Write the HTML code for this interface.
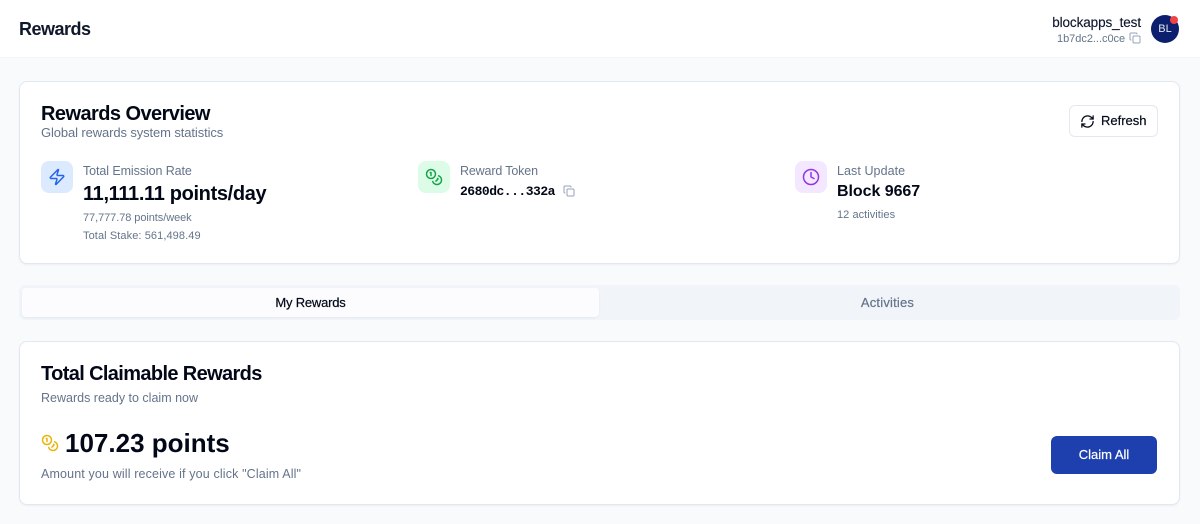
<!DOCTYPE html>
<html><head><meta charset="utf-8"><style>
html,body{margin:0;padding:0;width:1200px;height:524px;overflow:hidden;background:#f8fafc}
body{position:relative;font-family:"Liberation Sans",sans-serif;color:#020817}
.t{position:absolute;white-space:nowrap;line-height:20px}
.b{font-weight:700}
.m{-webkit-text-stroke:.2px currentColor}
.g{color:#64748b}
.box{position:absolute;box-sizing:border-box}
.card{background:#fff;border:1px solid #e2e8f0;border-radius:8px;box-shadow:0 1px 2px rgba(0,0,0,.05);left:19px;width:1161px}
svg{position:absolute;fill:none;stroke-linecap:round;stroke-linejoin:round}
.ic{width:32px;height:32px;border-radius:8px;position:absolute}
</style></head><body>
<div class="box" style="left:0;top:0;width:1200px;height:58px;background:#fff;border-bottom:1px solid #f1f5f9"></div>
<div class="t b" style="left:19px;top:19px;font-size:18px;letter-spacing:-.5px;color:#0f172a">Rewards</div>
<div class="t m" style="right:59px;top:13px;font-size:13.5px;letter-spacing:-.09px;-webkit-text-stroke-width:.15px;color:#0f172a">blockapps_test</div>
<div class="t g" style="left:1057px;top:29px;font-size:11px;letter-spacing:-.03px">1b7dc2...c0ce</div>
<svg style="left:1129px;top:32px" width="12" height="12" viewBox="0 0 24 24" stroke="#94a3b8" stroke-width="2"><rect x="8" y="8" width="14" height="14" rx="2"/><path d="M4 16c-1.100 0-2-.9-2-2V4c0-1.100.9-2 2-2h10c1.100 0 2 .9 2 2"/></svg>
<div class="box" style="left:1151px;top:15px;width:28px;height:28px;border-radius:50%;background:#0b1f6e;color:#e2e8f0;font-size:11px;line-height:28px;text-align:center">BL</div>
<div class="box" style="left:1170px;top:16px;width:8px;height:8px;border-radius:50%;background:#ef4444"></div>

<div class="box card" style="top:81px;height:183px"></div>
<div class="t b" style="left:41px;top:104px;font-size:20px;letter-spacing:-.56px">Rewards Overview</div>
<div class="t g" style="left:41px;top:123px;font-size:13px;letter-spacing:-.11px">Global rewards system statistics</div>
<div class="box" style="left:1069px;top:105px;width:89px;height:32px;background:#fff;border:1px solid #e2e8f0;border-radius:6px"></div>
<svg style="left:1080px;top:114px" width="15" height="15" viewBox="0 0 24 24" stroke="#020817" stroke-width="2"><path d="M3 12a9 9 0 0 1 9-9 9.750 9.750 0 0 1 6.740 2.740L21 8"/><path d="M21 3v5h-5"/><path d="M21 12a9 9 0 0 1-9 9 9.750 9.750 0 0 1-6.740-2.740L3 16"/><path d="M8 16H3v5"/></svg>
<div class="t m" style="left:1101px;top:111px;font-size:13px">Refresh</div>

<div class="ic" style="left:41px;top:161px;background:#dbeafe"></div>
<svg style="left:48px;top:168px" width="18" height="18" viewBox="0 0 24 24" stroke="#2563eb" stroke-width="2"><path d="M4 14a1 1 0 0 1-.78-1.630l9.900-10.200a.5.5 0 0 1 .86.46l-1.920 6.020A1 1 0 0 0 13 10h7a1 1 0 0 1 .78 1.630l-9.900 10.200a.5.5 0 0 1-.86-.46l1.920-6.020A1 1 0 0 0 11 14z"/></svg>
<div class="t g" style="left:83px;top:161px;font-size:12.5px;letter-spacing:-.09px">Total Emission Rate</div>
<div class="t b" style="left:83px;top:184px;font-size:20px;letter-spacing:-.34px">11,111.11 points/day</div>
<div class="t g" style="left:83px;top:208px;font-size:11px;letter-spacing:-.07px">77,777.78 points/week</div>
<div class="t g" style="left:83px;top:226px;font-size:11px;letter-spacing:.09px">Total Stake: 561,498.49</div>

<div class="ic" style="left:418px;top:161px;background:#dcfce7"></div>
<svg style="left:425px;top:168px" width="18" height="18" viewBox="0 0 24 24" stroke="#16a34a" stroke-width="2"><circle cx="8" cy="8" r="6"/><path d="M18.090 10.370A6 6 0 1 1 10.340 18"/><path d="M7 6h1v4"/><path d="m16.710 13.880.7.71-2.820 2.820"/></svg>
<div class="t g" style="left:460px;top:161px;font-size:12.5px;letter-spacing:-.15px">Reward Token</div>
<div class="t b" style="left:460px;top:182px;font-family:'Liberation Mono',monospace;font-size:13px;letter-spacing:-.5px">2680dc...332a</div>
<svg style="left:563px;top:185px" width="12" height="12" viewBox="0 0 24 24" stroke="#94a3b8" stroke-width="2"><rect x="8" y="8" width="14" height="14" rx="2"/><path d="M4 16c-1.100 0-2-.9-2-2V4c0-1.100.9-2 2-2h10c1.100 0 2 .9 2 2"/></svg>

<div class="ic" style="left:795px;top:161px;background:#f3e8ff"></div>
<svg style="left:802px;top:168px" width="18" height="18" viewBox="0 0 24 24" stroke="#9333ea" stroke-width="2"><circle cx="12" cy="12" r="10"/><polyline points="12 6 12 12 16 14"/></svg>
<div class="t g" style="left:837px;top:161px;font-size:12.5px;letter-spacing:.07px">Last Update</div>
<div class="t b" style="left:837px;top:182px;font-size:16px;letter-spacing:-.05px">Block 9667</div>
<div class="t g" style="left:837px;top:205px;font-size:11px;letter-spacing:.05px">12 activities</div>

<div class="box" style="left:19px;top:285px;width:1161px;height:35px;background:#f1f5f9;border-radius:6px"></div>
<div class="box" style="left:22px;top:288px;width:577px;height:29px;background:#fcfcfe;border-radius:4px;box-shadow:0 1px 2px rgba(0,0,0,.05)"></div>
<div class="t m" style="left:22px;width:577px;text-align:center;top:293px;font-size:13px;letter-spacing:-.2px">My Rewards</div>
<div class="t g m" style="left:599px;width:577px;text-align:center;top:293px;font-size:13px;letter-spacing:.2px">Activities</div>

<div class="box card" style="top:341px;height:164px"></div>
<div class="t b" style="left:41px;top:364px;font-size:20px;letter-spacing:-.63px">Total Claimable Rewards</div>
<div class="t g" style="left:41px;top:388px;font-size:12.5px">Rewards ready to claim now</div>
<svg style="left:41px;top:434px" width="18" height="18" viewBox="0 0 24 24" stroke="#eab308" stroke-width="2"><circle cx="8" cy="8" r="6"/><path d="M18.090 10.370A6 6 0 1 1 10.340 18"/><path d="M7 6h1v4"/><path d="m16.710 13.880.7.71-2.820 2.820"/></svg>
<div class="t b" style="left:65px;top:433px;font-size:26px">107.23 points</div>
<div class="t g" style="left:41px;top:464px;font-size:12.5px;letter-spacing:.14px">Amount you will receive if you click "Claim All"</div>
<div class="box" style="left:1051px;top:436px;width:106px;height:38px;background:#1e40af;border-radius:6px"></div>
<div class="t m" style="left:1051px;width:106px;text-align:center;top:445px;font-size:13px;color:#fff">Claim All</div>
</body></html>
